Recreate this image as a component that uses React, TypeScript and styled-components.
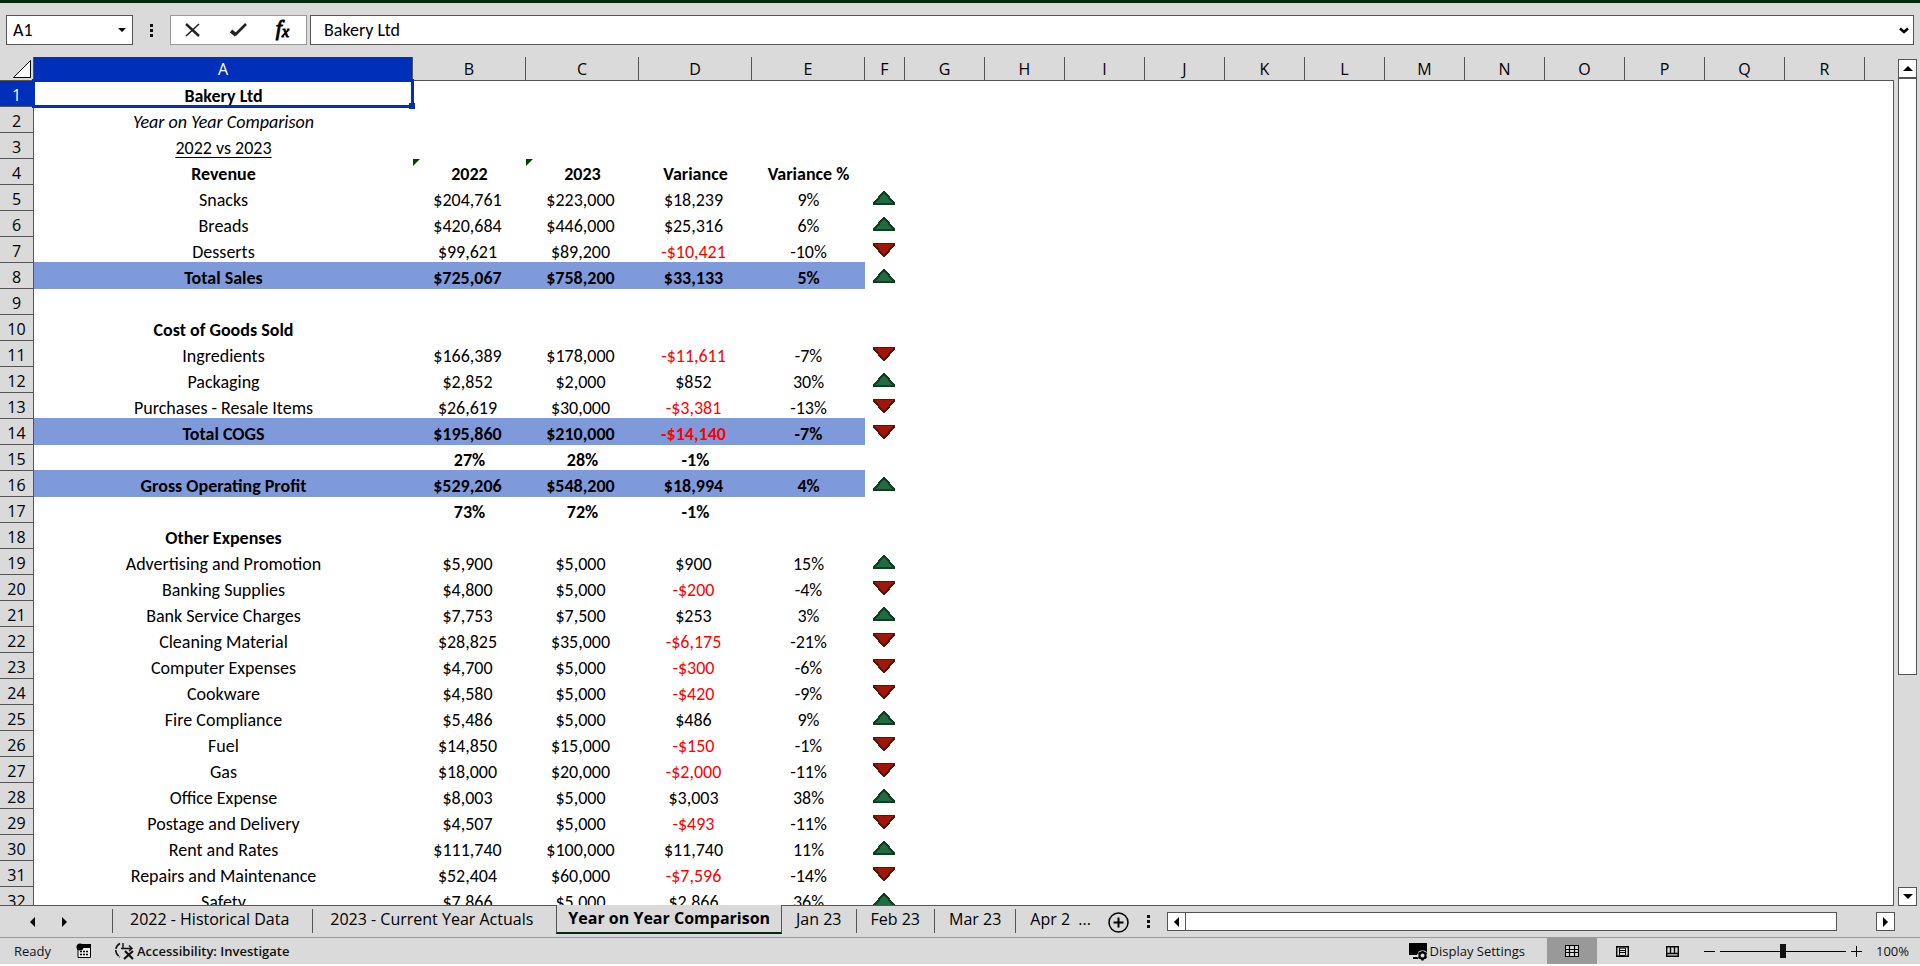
import React, { useState } from "react";
import styled, { createGlobalStyle, css } from "styled-components";

const color = {
  chrome: "#dadada",
  line: "#555555",
  softLine: "#999999",
  brand: "#04290f",
  select: "#0030ba",
  total: "#7f9adb",
  negative: "#ff0000",
};
const uiFont = `"Open Sans", "Noto Sans", sans-serif`;
const cellFont = `Carlito, Calibri, Lato, sans-serif`;

const GlobalStyle = createGlobalStyle`
  * { box-sizing: border-box; }
  body { margin: 0; background: #fff; }
  button, input { font: inherit; color: inherit; border: 0; margin: 0; padding: 0; background: none; border-radius: 0; outline: 0; }
  svg { display: block; flex: none; }
`;

const Workbook = styled.div`
  display: flex;
  flex-direction: column;
  height: 100vh;
  background: ${color.chrome};
  border-top: 3px solid ${color.brand};
  border-bottom: 2px solid #fff;
  font-family: ${uiFont};
  color: #000;
`;

/* Formula bar */
const FormulaBar = styled.header`
  display: flex;
  flex: none;
  height: 54px;
  padding: 12px 6px 12px 6px;
  font: 18px ${cellFont};
`;
const Box = styled.div<{ $soft?: boolean }>`
  display: flex;
  align-items: center;
  background: #fff;
  border: 1px solid ${(p) => (p.$soft ? color.softLine : color.line)};
`;
const NameBox = styled(Box)`
  width: 127px;
  padding: 0 6px;
  input { flex: 1; min-width: 0; }
`;
const Dots = styled.span`
  display: flex;
  flex: none;
  flex-direction: column;
  justify-content: center;
  gap: 2px;
  width: 37px;
  align-items: center;
  i { width: 3px; height: 3px; background: #111; }
`;
const EditActions = styled(Box)`
  width: 137px;
  justify-content: space-between;
  padding: 0 17px 0 14px;
`;
const FxLabel = styled.button`
  font: italic 22px "Liberation Serif", serif;
  line-height: 24px;
  -webkit-text-stroke: 1px #000;
  sub { font-size: 16px; vertical-align: -2px; }
`;
const FormulaBox = styled(Box)`
  flex: 1;
  margin-left: 3px;
  padding: 0 4px 0 13px;
  input { flex: 1; min-width: 0; }
`;

/* Grid */
const SheetArea = styled.div`
  display: flex;
  flex: 1;
  min-height: 0;
`;
const GridView = styled.div`
  flex: 1;
  min-width: 0;
  overflow: hidden;
  border-bottom: 1px solid ${color.line};
`;
const Grid = styled.table`
  width: 100%;
  table-layout: fixed;
  border-collapse: separate;
  border-spacing: 0;
  font: 18px/20px ${cellFont};
  th, td { padding: 0; }
`;
const headerCell = css<{ $active?: boolean }>`
  font: 16px/20px ${uiFont};
  text-align: center;
  background: ${(p) => (p.$active ? color.select : color.chrome)};
  color: ${(p) => (p.$active ? "#fff" : "#000")};
  border-right: 1px solid ${color.line};
  border-bottom: 1px solid ${color.line};
`;
const ColumnHead = styled.th<{ $active?: boolean }>`
  ${headerCell}
  height: 24px;
`;
const TailHead = styled.th`
  background: ${color.chrome};
  border-bottom: 1px solid ${color.line};
`;
const Corner = styled(ColumnHead)`
  svg { margin-left: 13px; }
`;
const RowHead = styled.th<{ $active?: boolean }>`
  ${headerCell}
  height: 26px;
  padding-top: 2px !important;
`;
type Look = "bold" | "italic" | "underline";
const Cell = styled.td<{ $look?: Look; $fill?: boolean; $money?: boolean; $neg?: boolean }>`
  position: relative;
  height: 26px;
  padding: 3px ${(p) => (p.$money ? 4 : 0)}px 0 0 !important;
  text-align: center;
  white-space: nowrap;
  font-weight: ${(p) => (p.$look === "bold" ? 700 : 400)};
  font-style: ${(p) => (p.$look === "italic" ? "italic" : "normal")};
  text-decoration: ${(p) => (p.$look === "underline" ? "underline" : "none")};
  text-underline-offset: 3px;
  color: ${(p) => (p.$neg ? color.negative : "#000")};
  ${(p) => p.$fill && css`background: ${color.total}; box-shadow: 0 -1px 0 ${color.total};`}
`;
const TrendCell = styled.td`
  height: 26px;
  vertical-align: middle;
  svg { margin: 0 0 0 8px; }
`;
const TailCell = styled.td`
  background: #fff;
  border-right: 1px solid ${color.line};
`;
const SheetBody = styled.tbody`
  background: #fff;
`;
const Selection = styled.span`
  position: absolute;
  z-index: 1;
  inset: -2px -1px -1px -2px;
  border: 3px solid ${color.select};
  &::after {
    content: "";
    position: absolute;
    right: -4px;
    bottom: -4px;
    width: 6px;
    height: 6px;
    background: ${color.select};
  }
`;
const ErrorFlag = styled.span`
  position: absolute;
  left: 0;
  top: 0;
  border-top: 7px solid #004000;
  border-right: 7px solid transparent;
`;

/* Scroll bars */
const VScroll = styled.div`
  display: flex;
  flex: none;
  flex-direction: column;
  width: 26px;
  padding: 2px 3px 0 4px;
`;
const ScrollButton = styled.button`
  display: flex;
  flex: none;
  align-items: center;
  justify-content: center;
  width: 19px;
  height: 19px;
  background: #fff;
  border: 1px solid ${color.line};
`;
const VThumb = styled.div`
  flex: 596;
  width: 19px;
  background: #fff;
  border: 1px solid ${color.line};
`;
const VRest = styled.div`
  flex: 213;
`;

/* Sheet tabs */
const TabBar = styled.nav`
  display: flex;
  flex: none;
  height: 31px;
  padding-right: 25px;
  font-size: 16px;
  line-height: 20px;
`;
const TabArrows = styled.div`
  display: flex;
  align-items: flex-start;
  width: 112px;
  padding: 11px 0 0 30px;
  gap: 27px;
`;
const TabList = styled.div`
  display: flex;
  align-items: flex-start;
`;
const Tab = styled.button<{ $active?: boolean; $wide?: boolean }>`
  position: relative;
  height: ${(p) => (p.$active ? 29 : 24)}px;
  margin-top: ${(p) => (p.$active ? -1 : 3)}px;
  padding: ${(p) => (p.$active ? "0 11px 1px" : p.$wide ? "0 23px 4px 17px" : "0 14px 4px")};
  white-space: pre;
  font-weight: ${(p) => (p.$active ? 700 : 400)};
  background: ${color.chrome};
  border-left: 1px solid ${color.line};
  ${(p) =>
    p.$active &&
    css`
      border-right: 1px solid ${color.line};
      border-bottom: 2px solid ${color.brand};
      & + button { border-left: 0; }
    `}
`;
const AddSheet = styled.button`
  margin: 6px 1px 0 3px;
  align-self: flex-start;
`;
const HScroll = styled.div`
  display: flex;
  flex: 1;
  min-width: 0;
  padding-top: 6px;
`;
const HThumb = styled.div`
  flex: 1;
  height: 19px;
  margin: 0 39px 0 -1px;
  background: #fff;
  border: 1px solid ${color.line};
`;

/* Status bar */
const StatusBar = styled.footer`
  display: flex;
  flex: none;
  align-items: center;
  height: 27px;
  padding: 0 11px 0 14px;
  border-top: 1px solid ${color.softLine};
  font-size: 13px;
  line-height: 18px;
  color: #111;
`;
const StatusItem = styled.button<{ $bold?: boolean; $gap?: number }>`
  display: flex;
  align-items: center;
  gap: 2px;
  margin-left: ${(p) => p.$gap ?? 0}px;
  white-space: nowrap;
  font-weight: ${(p) => (p.$bold ? 600 : 400)};
`;
const Spacer = styled.div`
  flex: 1;
`;
const ViewButton = styled.button<{ $on?: boolean }>`
  display: flex;
  align-items: center;
  justify-content: center;
  align-self: stretch;
  width: 50px;
  background: ${(p) => (p.$on ? color.softLine : "transparent")};
`;
const Views = styled.div`
  display: flex;
  align-self: stretch;
  margin-left: 22px;
`;
const ZoomRange = styled.input`
  appearance: none;
  width: 126px;
  height: 14px;
  margin: 0 5px;
  background: linear-gradient(#000, #000) center / 100% 1px no-repeat;
  &::-webkit-slider-thumb {
    appearance: none;
    width: 6px;
    height: 14px;
    background: #111;
  }
`;
const ZoomValue = styled.button`
  width: 47px;
  text-align: right;
`;

/* Drawings */
const Arrow = ({ dir, size = 5 }: { dir: "up" | "down" | "left" | "right"; size?: number }) => {
  const s = size;
  const shape = {
    up: `0,${s} ${s},0 ${2 * s},${s}`,
    down: `0,0 ${s},${s} ${2 * s},0`,
    left: `${s},0 0,${s} ${s},${2 * s}`,
    right: `0,0 ${s},${s} 0,${2 * s}`,
  }[dir];
  const flat = dir === "up" || dir === "down";
  return (
    <svg width={flat ? 2 * s : s} height={flat ? s : 2 * s} fill="#000" aria-hidden>
      <polygon points={shape} />
    </svg>
  );
};

const Trend = ({ up }: { up: boolean }) =>
  up ? (
    <svg width="22" height="14" shapeRendering="crispEdges" role="img" aria-label="Increase">
      <path d="M0 12L10 0H12L22 12V14H0Z" fill="#0d3f20" />
      <path d="M3 12L11 2L19 12Z" fill="#226b40" />
    </svg>
  ) : (
    <svg width="22" height="14" shapeRendering="crispEdges" role="img" aria-label="Decrease">
      <path d="M0 0H22V2L12 14H10L0 2Z" fill="#611107" />
      <path d="M2 1H20L11 12Z" fill="#a01608" />
    </svg>
  );

const CornerMark = () => (
  <svg width="18" height="18" fill="#fff" stroke="#000" aria-hidden>
    <path d="M17.500 0.500V17.500H0.500Z" />
  </svg>
);
const CancelIcon = () => (
  <svg width="16" height="14" fill="none" stroke="#222" aria-hidden>
    <path d="M1 1L14 13" strokeWidth="2.400" />
    <path d="M14 1L1 13" strokeWidth="1.600" />
  </svg>
);
const CheckIcon = () => (
  <svg width="17" height="14" fill="none" stroke="#222" aria-hidden>
    <path d="M1 8L6 12" strokeWidth="3.600" />
    <path d="M5 12L16 1" strokeWidth="2.600" />
  </svg>
);
const ChevronIcon = () => (
  <svg width="10" height="7" fill="none" stroke="#000" strokeWidth="2.600" aria-hidden>
    <path d="M1 1.500L5 5L9 1.500" />
  </svg>
);
const PlusCircle = () => (
  <svg width="21" height="21" fill="none" stroke="#000" strokeWidth="1.500" aria-hidden>
    <circle cx="10.500" cy="10.500" r="9.500" />
    <path d="M5.500 10.500H15.500M10.500 5.500V15.500" strokeWidth="2" />
  </svg>
);
const MacroIcon = () => (
  <svg width="16" height="16" aria-hidden>
    <path d="M2 4V14.500H14.500V2" fill="#eee" stroke="#000" />
    <path d="M6 1H15V5H6Z" fill="#000" />
    <circle cx="4" cy="4" r="3.500" fill="#000" />
    <path d="M4 8.500H13M4 11.500H13" stroke="#000" strokeWidth="1.500" strokeDasharray="2 1" />
  </svg>
);
const AccessIcon = () => (
  <svg width="20" height="18" fill="none" stroke="#111" aria-hidden>
    <path d="M5 1.500A7.500 7.500 0 0 0 5 15" strokeWidth="1.600" strokeDasharray="7 1" />
    <path d="M8 1V6M6 6.500H17M14 3.500L17 6.500L14 9" strokeWidth="1.400" />
    <path d="M10 9L18 17M18 9L9 17" strokeWidth="2.200" />
  </svg>
);
const DisplayIcon = () => (
  <svg width="19" height="19" aria-hidden>
    <path d="M0 1H18V13H0ZM4 15H10V17H4Z" fill="#000" />
    <path d="M13.500 8.500V18.500M9 11L18 16M18 11L9 16" stroke="#dadada" strokeWidth="4.500" />
    <path d="M13.500 9V18.500M9.500 11L17.500 16M17.500 11L9.500 16" stroke="#000" strokeWidth="2.500" />
    <circle cx="13.500" cy="13.500" r="3" fill="#dadada" stroke="#000" strokeWidth="2" />
  </svg>
);
const GridIcon = () => (
  <svg width="14" height="12" fill="#ddd" stroke="#000" aria-hidden>
    <path d="M0.500 0.500H13.500V11.500H0.500ZM4.500 0V12M9.500 0V12M0 4.500H14M0 7.500H14" strokeWidth="1.200" />
  </svg>
);
const PageIcon = () => (
  <svg width="13" height="11" fill="none" stroke="#000" aria-hidden>
    <path d="M0.700 0.700H12.300V10.300H0.700Z" strokeWidth="1.400" />
    <path d="M3.500 2V9.500H9.500V2ZM4 4.500H9M4 6.500H9" />
  </svg>
);
const BreakIcon = () => (
  <svg width="13" height="11" fill="none" stroke="#000" aria-hidden>
    <path d="M0.700 0.700H12.300V10.300H0.700Z" strokeWidth="1.400" />
    <path d="M4.500 0V7M8.500 0V7M1 7.500H12" strokeWidth="1.400" />
  </svg>
);
const SignIcon = ({ plus }: { plus?: boolean }) => (
  <svg width="11" height="11" stroke="#000" aria-hidden>
    <path d={plus ? "M0 5.500H11M5.500 0V11" : "M0 5.500H11"} />
  </svg>
);

/* Sheet data */
interface Row {
  label?: string;
  values?: string[];
  look?: Look;
  fill?: boolean;
  trend?: "up" | "down";
  flagged?: boolean;
}
const line = (label: string, values: string, trend: "up" | "down"): Row => ({ label, values: values.split(" "), trend });
const total = (label: string, values: string, trend: "up" | "down"): Row => ({ ...line(label, values, trend), look: "bold", fill: true });
const rows: Row[] = [
  { label: "Bakery Ltd", look: "bold" },
  { label: "Year on Year Comparison", look: "italic" },
  { label: "2022 vs 2023", look: "underline" },
  { label: "Revenue", values: ["2022", "2023", "Variance", "Variance %"], look: "bold", flagged: true },
  line("Snacks", "$204,761 $223,000 $18,239 9%", "up"),
  line("Breads", "$420,684 $446,000 $25,316 6%", "up"),
  line("Desserts", "$99,621 $89,200 -$10,421 -10%", "down"),
  total("Total Sales", "$725,067 $758,200 $33,133 5%", "up"),
  {},
  { label: "Cost of Goods Sold", look: "bold" },
  line("Ingredients", "$166,389 $178,000 -$11,611 -7%", "down"),
  line("Packaging", "$2,852 $2,000 $852 30%", "up"),
  line("Purchases - Resale Items", "$26,619 $30,000 -$3,381 -13%", "down"),
  total("Total COGS", "$195,860 $210,000 -$14,140 -7%", "down"),
  { values: ["27%", "28%", "-1%"], look: "bold" },
  total("Gross Operating Profit", "$529,206 $548,200 $18,994 4%", "up"),
  { values: ["73%", "72%", "-1%"], look: "bold" },
  { label: "Other Expenses", look: "bold" },
  line("Advertising and Promotion", "$5,900 $5,000 $900 15%", "up"),
  line("Banking Supplies", "$4,800 $5,000 -$200 -4%", "down"),
  line("Bank Service Charges", "$7,753 $7,500 $253 3%", "up"),
  line("Cleaning Material", "$28,825 $35,000 -$6,175 -21%", "down"),
  line("Computer Expenses", "$4,700 $5,000 -$300 -6%", "down"),
  line("Cookware", "$4,580 $5,000 -$420 -9%", "down"),
  line("Fire Compliance", "$5,486 $5,000 $486 9%", "up"),
  line("Fuel", "$14,850 $15,000 -$150 -1%", "down"),
  line("Gas", "$18,000 $20,000 -$2,000 -11%", "down"),
  line("Office Expense", "$8,003 $5,000 $3,003 38%", "up"),
  line("Postage and Delivery", "$4,507 $5,000 -$493 -11%", "down"),
  line("Rent and Rates", "$111,740 $100,000 $11,740 11%", "up"),
  line("Repairs and Maintenance", "$52,404 $60,000 -$7,596 -14%", "down"),
  line("Safety", "$7,866 $5,000 $2,866 36%", "up"),
];
const columns = "ABCDEFGHIJKLMNOPQR".split("");
const widths = [379, 113, 113, 113, 113, 40, ...Array(12).fill(80)];
const tabs = ["2022 - Historical Data", "2023 - Current Year Actuals", "Year on Year Comparison", "Jan 23", "Feb 23", "Mar 23", "Apr 2  ..."];

const SheetRow = ({ row, n }: { row: Row; n: number }) => (
  <tr>
    <RowHead scope="row" $active={n === 1}>{n}</RowHead>
    <Cell $look={row.look} $fill={row.fill}>
      {row.label}
      {n === 1 && <Selection />}
    </Cell>
    {[0, 1, 2, 3].map((i) => {
      const value = row.values?.[i] ?? "";
      const money = value.includes("$");
      return (
        <Cell key={i} $look={row.look} $fill={row.fill} $money={money} $neg={value.startsWith("-$")}>
          {row.flagged && i < 2 && <ErrorFlag />}
          {value}
        </Cell>
      );
    })}
    <TrendCell>{row.trend && <Trend up={row.trend === "up"} />}</TrendCell>
    <TailCell colSpan={13} />
  </tr>
);

export default function App() {
  const [formula, setFormula] = useState("Bakery Ltd");
  const [active, setActive] = useState(2);
  return (
    <Workbook>
      <GlobalStyle />
      <FormulaBar>
        <NameBox>
          <input aria-label="Name box" defaultValue="A1" />
          <button aria-label="Open name list"><Arrow dir="down" size={4} /></button>
        </NameBox>
        <Dots><i /><i /><i /></Dots>
        <EditActions $soft>
          <button aria-label="Cancel"><CancelIcon /></button>
          <button aria-label="Enter"><CheckIcon /></button>
          <FxLabel aria-label="Insert function">f<sub>x</sub></FxLabel>
        </EditActions>
        <FormulaBox>
          <input aria-label="Formula bar" value={formula} onChange={(e) => setFormula(e.target.value)} />
          <button aria-label="Expand formula bar"><ChevronIcon /></button>
        </FormulaBox>
      </FormulaBar>

      <SheetArea>
        <GridView>
          <Grid>
            <colgroup>
              <col width={34} />
              {widths.map((w, i) => <col key={i} width={w} />)}
              <col />
            </colgroup>
            <thead>
              <tr>
                <Corner aria-label="Select all"><CornerMark /></Corner>
                {columns.map((c) => <ColumnHead key={c} scope="col" $active={c === "A"}>{c}</ColumnHead>)}
                <TailHead />
              </tr>
            </thead>
            <SheetBody>
              {rows.map((row, i) => <SheetRow key={i} row={row} n={i + 1} />)}
            </SheetBody>
          </Grid>
        </GridView>
        <VScroll>
          <ScrollButton aria-label="Scroll up"><Arrow dir="up" /></ScrollButton>
          <VThumb />
          <VRest />
          <ScrollButton aria-label="Scroll down"><Arrow dir="down" /></ScrollButton>
        </VScroll>
      </SheetArea>

      <TabBar aria-label="Sheets">
        <TabArrows>
          <button aria-label="Previous sheet"><Arrow dir="left" /></button>
          <button aria-label="Next sheet"><Arrow dir="right" /></button>
        </TabArrows>
        <TabList role="tablist">
          {tabs.map((t, i) => (
            <Tab key={t} role="tab" aria-selected={i === active} $active={i === active} $wide={i < 2} onClick={() => setActive(i)}>
              {t}
            </Tab>
          ))}
        </TabList>
        <AddSheet aria-label="New sheet"><PlusCircle /></AddSheet>
        <Dots><i /><i /><i /></Dots>
        <HScroll>
          <ScrollButton aria-label="Scroll left"><Arrow dir="left" /></ScrollButton>
          <HThumb />
          <ScrollButton aria-label="Scroll right"><Arrow dir="right" /></ScrollButton>
        </HScroll>
      </TabBar>

      <StatusBar>
        <span>Ready</span>
        <StatusItem aria-label="Record macro" $gap={25}><MacroIcon /></StatusItem>
        <StatusItem $bold $gap={23}><AccessIcon />Accessibility: Investigate</StatusItem>
        <Spacer />
        <StatusItem><DisplayIcon />Display Settings</StatusItem>
        <Views>
          <ViewButton aria-label="Normal view" $on><GridIcon /></ViewButton>
          <ViewButton aria-label="Page layout view"><PageIcon /></ViewButton>
          <ViewButton aria-label="Page break preview"><BreakIcon /></ViewButton>
        </Views>
        <StatusItem aria-label="Zoom out" $gap={7}><SignIcon /></StatusItem>
        <ZoomRange type="range" min={0} max={200} defaultValue={100} aria-label="Zoom" />
        <StatusItem aria-label="Zoom in"><SignIcon plus /></StatusItem>
        <ZoomValue>100%</ZoomValue>
      </StatusBar>
    </Workbook>
  );
}
